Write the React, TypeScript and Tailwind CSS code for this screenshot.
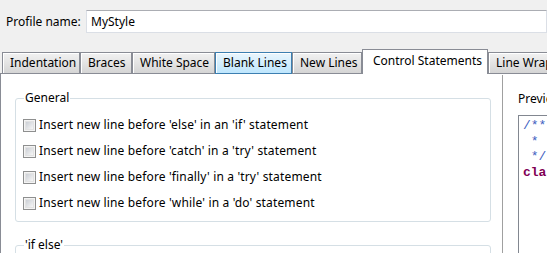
import React from "react";

const tabs = [
  { label: "Indentation", w: "w-[78px]" },
  { label: "Braces", w: "w-[52px]" },
  { label: "White Space", w: "w-[83px]" },
  { label: "Blank Lines", w: "w-[77px]", hover: true },
  { label: "New Lines", w: "w-[70px]" },
  { label: "Control Statements", w: "w-[126px]", active: true },
  { label: "Line Wrapping", w: "w-[90px]" },
];

const options = [
  "Insert new line before 'else' in an 'if' statement",
  "Insert new line before 'catch' in a 'try' statement",
  "Insert new line before 'finally' in a 'try' statement",
  "Insert new line before 'while' in a 'do' statement",
];

function Checkbox() {
  return (
    <span className="w-[13px] h-[13px] border border-[#8e8f8f] bg-[#f4f4f4] flex items-center justify-center shrink-0">
      <span className="w-[9px] h-[9px] bg-gradient-to-br from-[#cbcfd5] to-[#f6f6f6] border border-[#e2e2e2]" />
    </span>
  );
}

export default function App() {
  return (
    <div className="w-[547px] h-[253px] bg-[#f0f0f0] overflow-hidden text-[12px] text-black font-['Noto_Sans',sans-serif]">
      {/* profile name */}
      <div className="flex items-center pt-[10px] pl-[6px]">
        <span className="w-[80px] shrink-0 leading-[23px]">Profile name:</span>
        <div className="flex-1 h-[23px] bg-white border border-[#dbdfe6] border-t-[#abadb3] pl-[4px] leading-[21px]">
          MyStyle
        </div>
      </div>

      {/* tabs */}
      <div className="flex items-end h-[25px] pl-[2px] mt-[16px] relative z-10">
        {tabs.map((t) =>
          t.active ? (
            <div
              key={t.label}
              className={`${t.w} h-[25px] shrink-0 bg-white border border-b-0 border-[#898c95] pl-[10px] leading-[22px] whitespace-nowrap`}
            >
              {t.label}
            </div>
          ) : t.hover ? (
            <div
              key={t.label}
              className={`${t.w} h-[22px] shrink-0 bg-gradient-to-b from-[#eaf6fd] to-[#bee6fd] border border-[#3c7fb1] shadow-[inset_1px_1px_0_#fff] pl-[7px] leading-[20px] whitespace-nowrap overflow-hidden`}
            >
              {t.label}
            </div>
          ) : (
            <div
              key={t.label}
              className={`${t.w} h-[22px] shrink-0 bg-gradient-to-b from-[#f2f2f2] to-[#d5d5d5] border border-[#898c95] shadow-[inset_1px_1px_0_#fff] pl-[7px] leading-[20px] whitespace-nowrap overflow-hidden`}
            >
              {t.label}
            </div>
          )
        )}
      </div>

      {/* panel */}
      <div className="-mt-[1px] bg-white border-t border-l border-[#898c95] h-[200px] flex">
        <div className="w-[501px] shrink-0 pl-[14px] pr-[11px] pt-[17px]">
          <fieldset className="border border-[#d5dfe5] rounded-[3px] h-[131px] pl-[7px] pt-[7px]">
            <legend className="px-[1px] ml-[1px] leading-[14px]">General</legend>
            <div className="flex flex-col">
              {options.map((o) => (
                <label key={o} className="flex items-center h-[26px] gap-[3px] whitespace-nowrap tracking-[0.15px]">
                  <Checkbox />
                  <span>{o}</span>
                </label>
              ))}
            </div>
          </fieldset>
          <fieldset className="border border-[#d5dfe5] rounded-[3px] h-[60px] mt-[16px] pl-[7px]">
            <legend className="px-[1px] ml-[1px] leading-[14px]">'if else'</legend>
          </fieldset>
        </div>
        <div className="w-px bg-[#a0a0a0] mt-[1px] shrink-0" />
        <div className="flex-1 pl-[15px] pt-[18px] overflow-hidden">
          <div className="leading-[14px] whitespace-nowrap">Preview:</div>
          <div className="mt-[9px] border border-[#828790] border-r-0 h-[200px] pl-[4px] pt-[2px] font-['Liberation_Mono',monospace] text-[13px] leading-[15.5px] whitespace-pre">
            <div className="text-[#3f5fbf]">/**</div>
            <div className="text-[#3f5fbf]"> *</div>
            <div className="text-[#3f5fbf]"> */</div>
            <div className="text-[#7f0055] font-bold">class</div>
          </div>
        </div>
      </div>
    </div>
  );
}
